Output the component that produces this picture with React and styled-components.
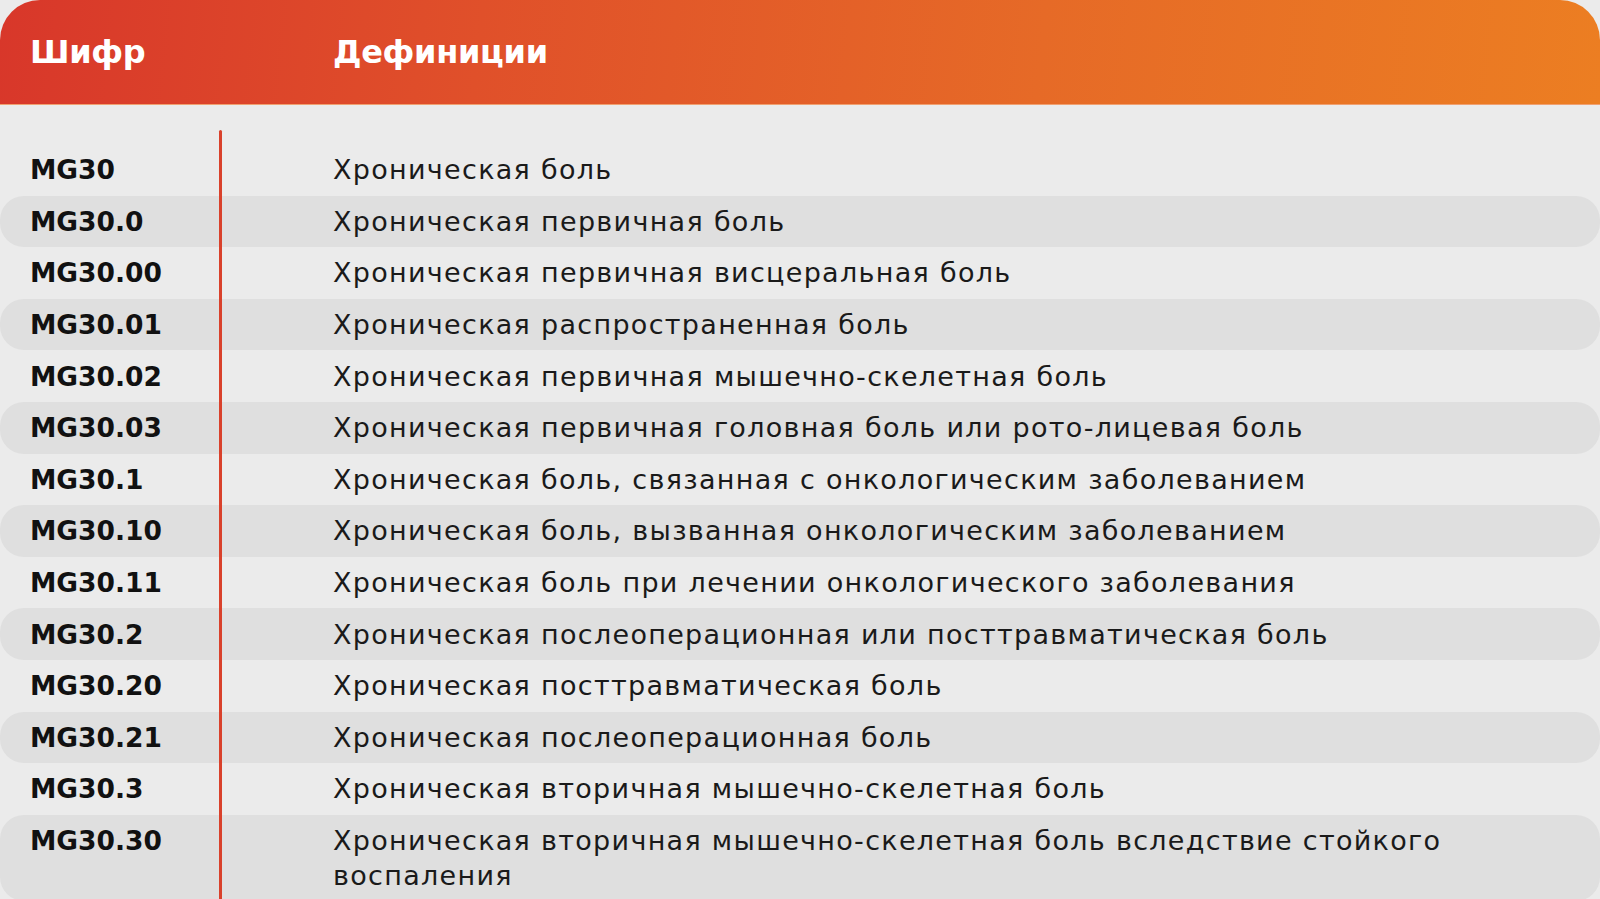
import React from "react";
import styled, { createGlobalStyle } from "styled-components";

const rows = [
  ["MG30", "Хроническая боль"],
  ["MG30.0", "Хроническая первичная боль"],
  ["MG30.00", "Хроническая первичная висцеральная боль"],
  ["MG30.01", "Хроническая распространенная боль"],
  ["MG30.02", "Хроническая первичная мышечно-скелетная боль"],
  ["MG30.03", "Хроническая первичная головная боль или рото-лицевая боль"],
  ["MG30.1", "Хроническая боль, связанная с онкологическим заболеванием"],
  ["MG30.10", "Хроническая боль, вызванная онкологическим заболеванием"],
  ["MG30.11", "Хроническая боль при лечении онкологического заболевания"],
  ["MG30.2", "Хроническая послеоперационная или посттравматическая боль"],
  ["MG30.20", "Хроническая посттравматическая боль"],
  ["MG30.21", "Хроническая послеоперационная боль"],
  ["MG30.3", "Хроническая вторичная мышечно-скелетная боль"],
  ["MG30.30", "Хроническая вторичная мышечно-скелетная боль вследствие стойкого воспаления"],
];

const GlobalStyle = createGlobalStyle`
  html, body {
    margin: 0;
    height: 899px;
    overflow: hidden;
    background: #ebebeb;
  }
  body {
    font-family: "DejaVu Sans", "Liberation Sans", sans-serif;
    color: #141414;
  }
`;

const Table = styled.div`
  width: 1600px;
  height: 899px;
  display: flex;
  flex-direction: column;
  background: #ebebeb;
`;

const Header = styled.div`
  height: 105px;
  flex-shrink: 0;
  display: grid;
  grid-template-columns: 303px 1fr;
  align-items: center;
  padding-left: 30px;
  box-sizing: border-box;
  border-radius: 40px 40px 0 0;
  background: linear-gradient(96deg, #d8372a 0%, #e0502a 30%, #e66a27 65%, #ec7e22 100%);
  border-bottom: 1px solid #f0a070;
`;

const HeadCell = styled.div`
  color: #fff;
  font-size: 32px;
  font-weight: 700;
  letter-spacing: -0.3px;
`;

const Body = styled.div`
  position: relative;
  flex: 1;
  padding-top: 39px;
  overflow: hidden;
`;

const Divider = styled.div`
  position: absolute;
  left: 219px;
  top: 25px;
  bottom: 0;
  width: 3px;
  border-radius: 2px 2px 0 0;
  background: #d9412b;
  z-index: 1;
`;

const Row = styled.div`
  display: grid;
  grid-template-columns: 303px 1170px;
  align-items: start;
  padding: 8.3px 0 8.3px 30px;
  box-sizing: border-box;
  min-height: 51.6px;
  line-height: 35px;
  border-radius: 24px;
  background: ${(p) => (p.$striped ? "#dfdfdf" : "transparent")};
`;

const Code = styled.div`
  font-size: 26.5px;
  font-weight: 700;
  color: #111;
`;

const Def = styled.div`
  font-size: 27px;
  letter-spacing: 1.3px;
  color: #1a1a1a;
`;

export default function App() {
  return (
    <>
      <GlobalStyle />
      <Table>
        <Header>
          <HeadCell>Шифр</HeadCell>
          <HeadCell>Дефиниции</HeadCell>
        </Header>
        <Body>
          <Divider />
          {rows.map(([code, def], i) => (
            <Row key={code} $striped={i % 2 === 1}>
              <Code>{code}</Code>
              <Def>{def}</Def>
            </Row>
          ))}
        </Body>
      </Table>
    </>
  );
}
